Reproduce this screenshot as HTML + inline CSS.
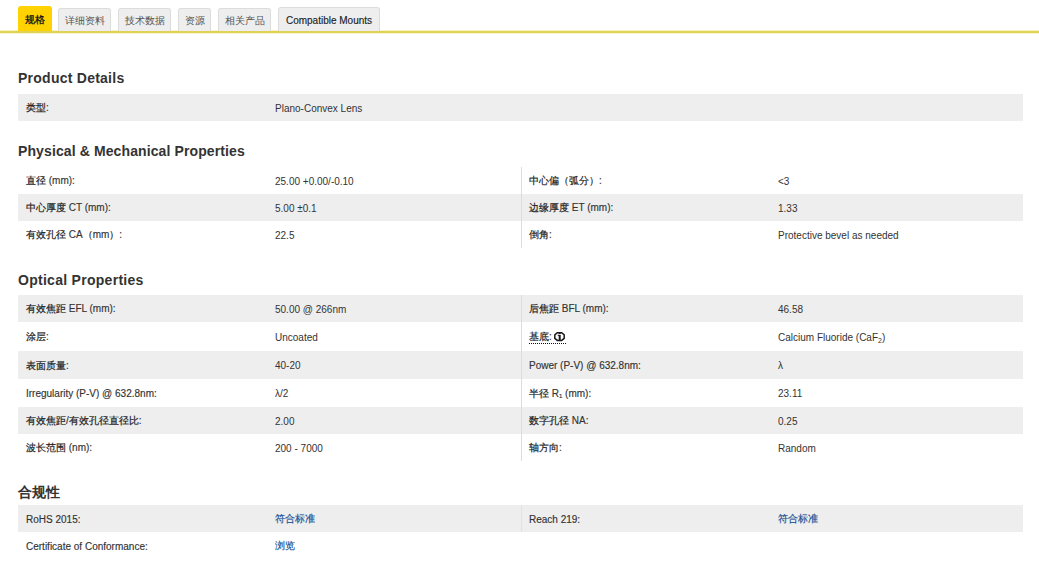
<!DOCTYPE html>
<html><head><meta charset="utf-8">
<style>
*{margin:0;padding:0;box-sizing:border-box}
html,body{width:1039px;height:587px;background:#fff;overflow:hidden;font-family:"Liberation Sans",sans-serif;color:#333}
.tab{position:absolute;z-index:2;background:#eeeeee;border:1px solid #dcdcdc;border-bottom:none;border-radius:3px 3px 0 0;font-size:10px;color:#555;text-align:center;white-space:nowrap}
.tab.act{background:#ffd200;border-color:#ffd200;color:#111;-webkit-text-stroke:0.3px #111}
.line{position:absolute;left:0;top:30px;width:1039px;height:4px;background:linear-gradient(#f7f0c0 0 1px,#e0d256 1px 3px,#f9f4d0 3px 4px)}
h2{position:absolute;left:18px;font-size:14px;line-height:14px;font-weight:bold;color:#333;white-space:nowrap}
.row{position:absolute;left:18px;width:1005px}
.row.g{background:#eeeeee}
.c{position:absolute;top:0;height:100%;display:flex;align-items:center;font-size:10px;white-space:nowrap;color:#333;padding-top:1px}
.l1,.l2{-webkit-text-stroke:0.15px #333}
.k{-webkit-text-stroke:0.2px #222;color:#222}
.l1{left:8px}.v1{left:257px}.l2{left:511px}.v2{left:760px}
.div{position:absolute;left:521px;width:1px;background:#dcdcdc}
a{color:#1d5598;text-decoration:none;-webkit-text-stroke:0.2px #1d5598}
sub{font-size:7px;vertical-align:-2px;line-height:0}
sub.s1{font-size:6px;vertical-align:-1px}
.dots{position:absolute;left:529px;width:37px;height:1px;background:repeating-linear-gradient(90deg,#111 0 1px,transparent 1px 2px)}
.info{position:absolute}
</style></head><body>
<div class="tab act" style="left:18px;top:6px;width:34px;height:25px;line-height:26px">规格</div>
<div class="tab" style="left:58px;top:8px;width:53px;height:23px;line-height:24px">详细资料</div>
<div class="tab" style="left:118px;top:8px;width:53px;height:23px;line-height:24px">技术数据</div>
<div class="tab" style="left:178px;top:8px;width:33px;height:23px;line-height:24px">资源</div>
<div class="tab" style="left:218px;top:8px;width:53px;height:23px;line-height:24px">相关产品</div>
<div class="tab" style="left:278px;top:7px;width:102px;height:24px;line-height:25px;color:#222;-webkit-text-stroke:0.15px #222">Compatible Mounts</div>
<div class="line"></div>
<h2 style="top:71px;letter-spacing:0.25px">Product Details</h2>
<div class="row g" style="top:94px;height:27px"><div class="c l1"><span><span class="k">类型</span>:</span></div><div class="c v1"><span>Plano-Convex Lens</span></div></div>
<h2 style="top:144px;letter-spacing:0.11px">Physical &amp; Mechanical Properties</h2>
<div class="row" style="top:167px;height:27px"><div class="c l1"><span><span class="k">直径</span> (mm):</span></div><div class="c v1"><span>25.00 +0.00/-0.10</span></div><div class="c l2"><span><span class="k">中心偏（弧分）</span>:</span></div><div class="c v2"><span>&lt;3</span></div></div>
<div class="row g" style="top:194px;height:27px"><div class="c l1"><span><span class="k">中心厚度</span> CT (mm):</span></div><div class="c v1"><span>5.00 ±0.1</span></div><div class="c l2"><span><span class="k">边缘厚度</span> ET (mm):</span></div><div class="c v2"><span>1.33</span></div></div>
<div class="row" style="top:221px;height:27px"><div class="c l1"><span><span class="k">有效孔径</span> CA<span class="k">（</span>mm<span class="k">）</span>:</span></div><div class="c v1"><span>22.5</span></div><div class="c l2"><span><span class="k">倒角</span>:</span></div><div class="c v2"><span>Protective bevel as needed</span></div></div>
<div class="div" style="top:167px;height:81px"></div>
<h2 style="top:273px;letter-spacing:0.28px">Optical Properties</h2>
<div class="row g" style="top:295px;height:27px"><div class="c l1"><span><span class="k">有效焦距</span> EFL (mm):</span></div><div class="c v1"><span>50.00 @ 266nm</span></div><div class="c l2"><span><span class="k">后焦距</span> BFL (mm):</span></div><div class="c v2"><span>46.58</span></div></div>
<div class="row" style="top:322px;height:29px"><div class="c l1"><span><span class="k">涂层</span>:</span></div><div class="c v1"><span>Uncoated</span></div><div class="c l2"><span><span class="k">基底</span>:</span></div><div class="c v2"><span>Calcium Fluoride (CaF<sub>2</sub>)</span></div></div>
<div class="dots" style="top:343px"></div><svg class="info" width="12" height="10" viewBox="0 0 12 10" style="left:554px;top:332px"><path d="M3.3 0.8 H7.7 L10.2 2.9 V6.3 L7.7 8.4 H3.3 L0.8 6.3 V2.9 Z" fill="#fff" stroke="#1a1a1a" stroke-width="1.5"/><rect x="4.7" y="2.8" width="2" height="5.6" fill="#1a1a1a"/><rect x="3.7" y="2.8" width="1.2" height="1.1" fill="#1a1a1a"/><rect x="4.7" y="0.8" width="2" height="1.2" fill="#1a1a1a"/></svg>
<div class="row g" style="top:351px;height:28px"><div class="c l1"><span><span class="k">表面质量</span>:</span></div><div class="c v1"><span>40-20</span></div><div class="c l2"><span>Power (P-V) @ 632.8nm:</span></div><div class="c v2"><span>λ</span></div></div>
<div class="row" style="top:379px;height:28px"><div class="c l1"><span>Irregularity (P-V) @ 632.8nm:</span></div><div class="c v1"><span>λ/2</span></div><div class="c l2"><span><span class="k">半径</span> R<sub class=s1>1</sub> (mm):</span></div><div class="c v2"><span>23.11</span></div></div>
<div class="row g" style="top:407px;height:27px"><div class="c l1"><span><span class="k">有效焦距</span>/<span class="k">有效孔径直径比</span>:</span></div><div class="c v1"><span>2.00</span></div><div class="c l2"><span><span class="k">数字孔径</span> NA:</span></div><div class="c v2"><span>0.25</span></div></div>
<div class="row" style="top:434px;height:27px"><div class="c l1"><span><span class="k">波长范围</span> (nm):</span></div><div class="c v1"><span>200 - 7000</span></div><div class="c l2"><span><span class="k">轴方向</span>:</span></div><div class="c v2"><span>Random</span></div></div>
<div class="div" style="top:295px;height:166px"></div>
<h2 style="top:485px">合规性</h2>
<div class="row g" style="top:505px;height:27px"><div class="c l1"><span>RoHS 2015:</span></div><div class="c v1"><span><a>符合标准</a></span></div><div class="c l2"><span>Reach 219:</span></div><div class="c v2"><span><a>符合标准</a></span></div></div>
<div class="row" style="top:532px;height:27px"><div class="c l1"><span>Certificate of Conformance:</span></div><div class="c v1"><span><a>浏览</a></span></div></div>
<div class="div" style="top:505px;height:27px;background:#e2e2e2"></div>
</body></html>
